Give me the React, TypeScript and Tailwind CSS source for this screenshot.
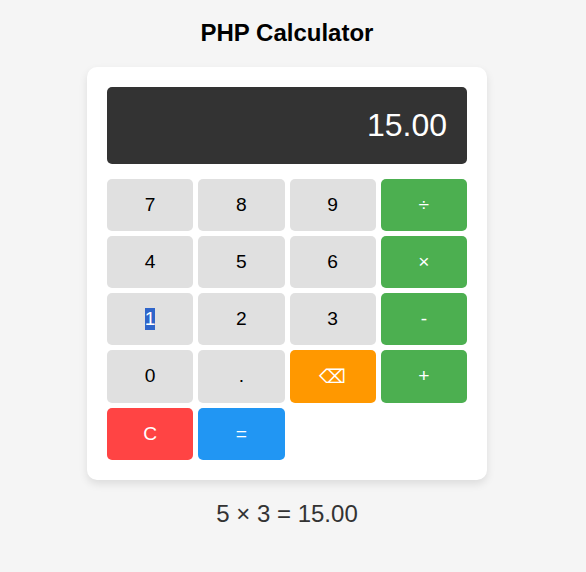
const base = 'flex items-start justify-center rounded-[5px] text-[19.2px] leading-[22px]';

const tones = {
  number: 'bg-[#e0e0e0] pt-[15px] text-black',
  operator: 'bg-[#4caf50] pt-[15px] text-white',
  erase: 'bg-[#ff9800] pt-4 text-white',
  clear: 'bg-[#ff4444] pt-[15px] text-white',
  equals: 'bg-[#2196f3] pt-[15px] text-white',
};

type Key = { label: string; tone: keyof typeof tones; selected?: boolean };

const keys: Key[] = [
  { label: '7', tone: 'number' },
  { label: '8', tone: 'number' },
  { label: '9', tone: 'number' },
  { label: '÷', tone: 'operator' },
  { label: '4', tone: 'number' },
  { label: '5', tone: 'number' },
  { label: '6', tone: 'number' },
  { label: '×', tone: 'operator' },
  { label: '1', tone: 'number', selected: true },
  { label: '2', tone: 'number' },
  { label: '3', tone: 'number' },
  { label: '-', tone: 'operator' },
  { label: '0', tone: 'number' },
  { label: '.', tone: 'number' },
  { label: '⌫', tone: 'erase' },
  { label: '+', tone: 'operator' },
  { label: 'C', tone: 'clear' },
  { label: '=', tone: 'equals' },
];

export default function App() {
  return (
    <div className="min-h-screen bg-[#f5f5f5] pl-[87px] pt-[19px] font-['Liberation_Sans',Arial,sans-serif] text-black">
      <main className="w-[400px]">
        <h1 className="mb-[21px] text-center text-2xl leading-[27px] font-bold">PHP Calculator</h1>
        <section className="rounded-[10px] bg-white p-5 shadow-[0_4px_8px_rgba(0,0,0,0.1)]">
          <div className="mb-[15px] flex h-[77px] items-center justify-end rounded-[5px] bg-[#333] px-5 text-[32px] leading-[37px] text-white">
            15.00
          </div>
          <div className="grid grid-cols-4 grid-rows-[52px_52px_52px_53px_52px] gap-[5px]">
            {keys.map((key) => (
              <button key={key.label} type="button" className={`${base} ${tones[key.tone]}`}>
                {key.selected ? <span className="bg-[#2f65ca] text-white">{key.label}</span> : key.label}
              </button>
            ))}
          </div>
        </section>
        <p className="mt-5 text-center text-2xl leading-[27px] text-[#333]">5 × 3 = 15.00</p>
      </main>
    </div>
  );
}
